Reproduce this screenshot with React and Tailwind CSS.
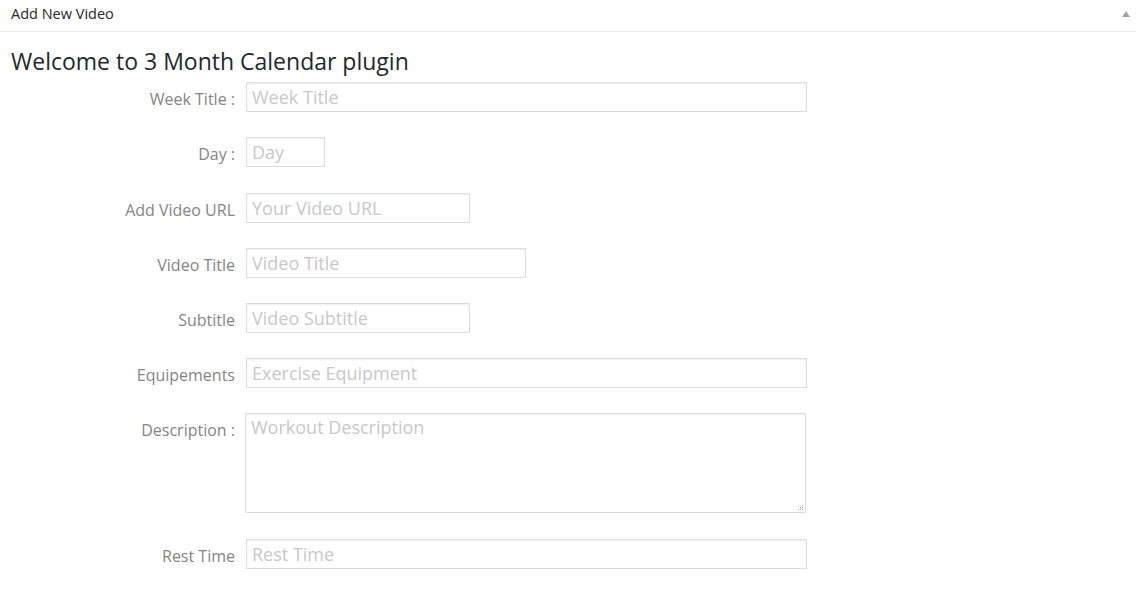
import React from 'react';

const rows = [
  { label: 'Week Title :', placeholder: 'Week Title', w: 'w-[561px]' },
  { label: 'Day :', placeholder: 'Day', w: 'w-[79px]' },
  { label: 'Add Video URL', placeholder: 'Your Video URL', w: 'w-[224px]', extra: true },
  { label: 'Video Title', placeholder: 'Video Title', w: 'w-[280px]' },
  { label: 'Subtitle', placeholder: 'Video Subtitle', w: 'w-[224px]' },
  { label: 'Equipements', placeholder: 'Exercise Equipment', w: 'w-[561px]' },
];

const inputCls =
  'h-[30px] border border-[#dddddd] bg-white px-[5px] text-[18px] text-[#333] placeholder:text-[#c8c8c8] shadow-[inset_0_1px_2px_rgba(0,0,0,0.07)] outline-none';

function Row({ label, children, top, className = '' }) {
  return (
    <div className={`flex ${top ? 'items-start' : 'items-center'} ${className}`}>
      <label
        className={`w-[235px] shrink-0 text-right text-[16px] text-[#858585] ${top ? 'pt-[5px]' : 'pt-[3px]'}`}
      >
        {label}
      </label>
      <div className="ml-[11px]">{children}</div>
    </div>
  );
}

export default function App() {
  return (
    <div className="min-h-[596px] w-[1136px] bg-white font-['Open_Sans',sans-serif]">
      <div className="flex h-[32px] items-center justify-between border-b border-[#eeeeee] pb-[3px] pl-[11px] pr-[5px]">
        <span className="text-[14.5px] text-[#23282d]">Add New Video</span>
        <svg width="10" height="8" viewBox="0 0 10 8">
          <polygon points="5,1 9,7 1,7" fill="#a0a5aa" />
        </svg>
      </div>
      <div className="px-[11px] pt-[13px]">
        <h2 className="text-[23px] leading-[32px] text-[#23282d]">Welcome to 3 Month Calendar plugin</h2>
      </div>
      <div className="flex flex-col gap-[25px] pt-[5px]">
        {rows.map((r) => (
          <Row key={r.label} label={r.label} className={r.extra ? 'mt-px' : ''}>
            <input className={`${inputCls} ${r.w}`} placeholder={r.placeholder} />
          </Row>
        ))}
        <Row label="Description :" top>
          <div className="relative -ml-px">
            <textarea
              className="block h-[100px] w-[561px] resize-none border border-[#dddddd] bg-white px-[5px] py-0 text-[18px] text-[#333] placeholder:text-[#c8c8c8] shadow-[inset_0_1px_2px_rgba(0,0,0,0.07)] outline-none"
              placeholder="Workout Description"
            />
            <svg width="7" height="7" viewBox="0 0 7 7" className="absolute bottom-[2px] right-[2px]">
              <rect x="5" y="1" width="1" height="1" fill="#aaa" />
              <rect x="3" y="3" width="1" height="1" fill="#aaa" />
              <rect x="5" y="3" width="1" height="1" fill="#aaa" />
              <rect x="1" y="5" width="1" height="1" fill="#aaa" />
              <rect x="3" y="5" width="1" height="1" fill="#aaa" />
              <rect x="5" y="5" width="1" height="1" fill="#aaa" />
            </svg>
          </div>
        </Row>
        <Row label="Rest Time" className="mt-px">
          <input className={`${inputCls} w-[561px]`} placeholder="Rest Time" />
        </Row>
      </div>
    </div>
  );
}
